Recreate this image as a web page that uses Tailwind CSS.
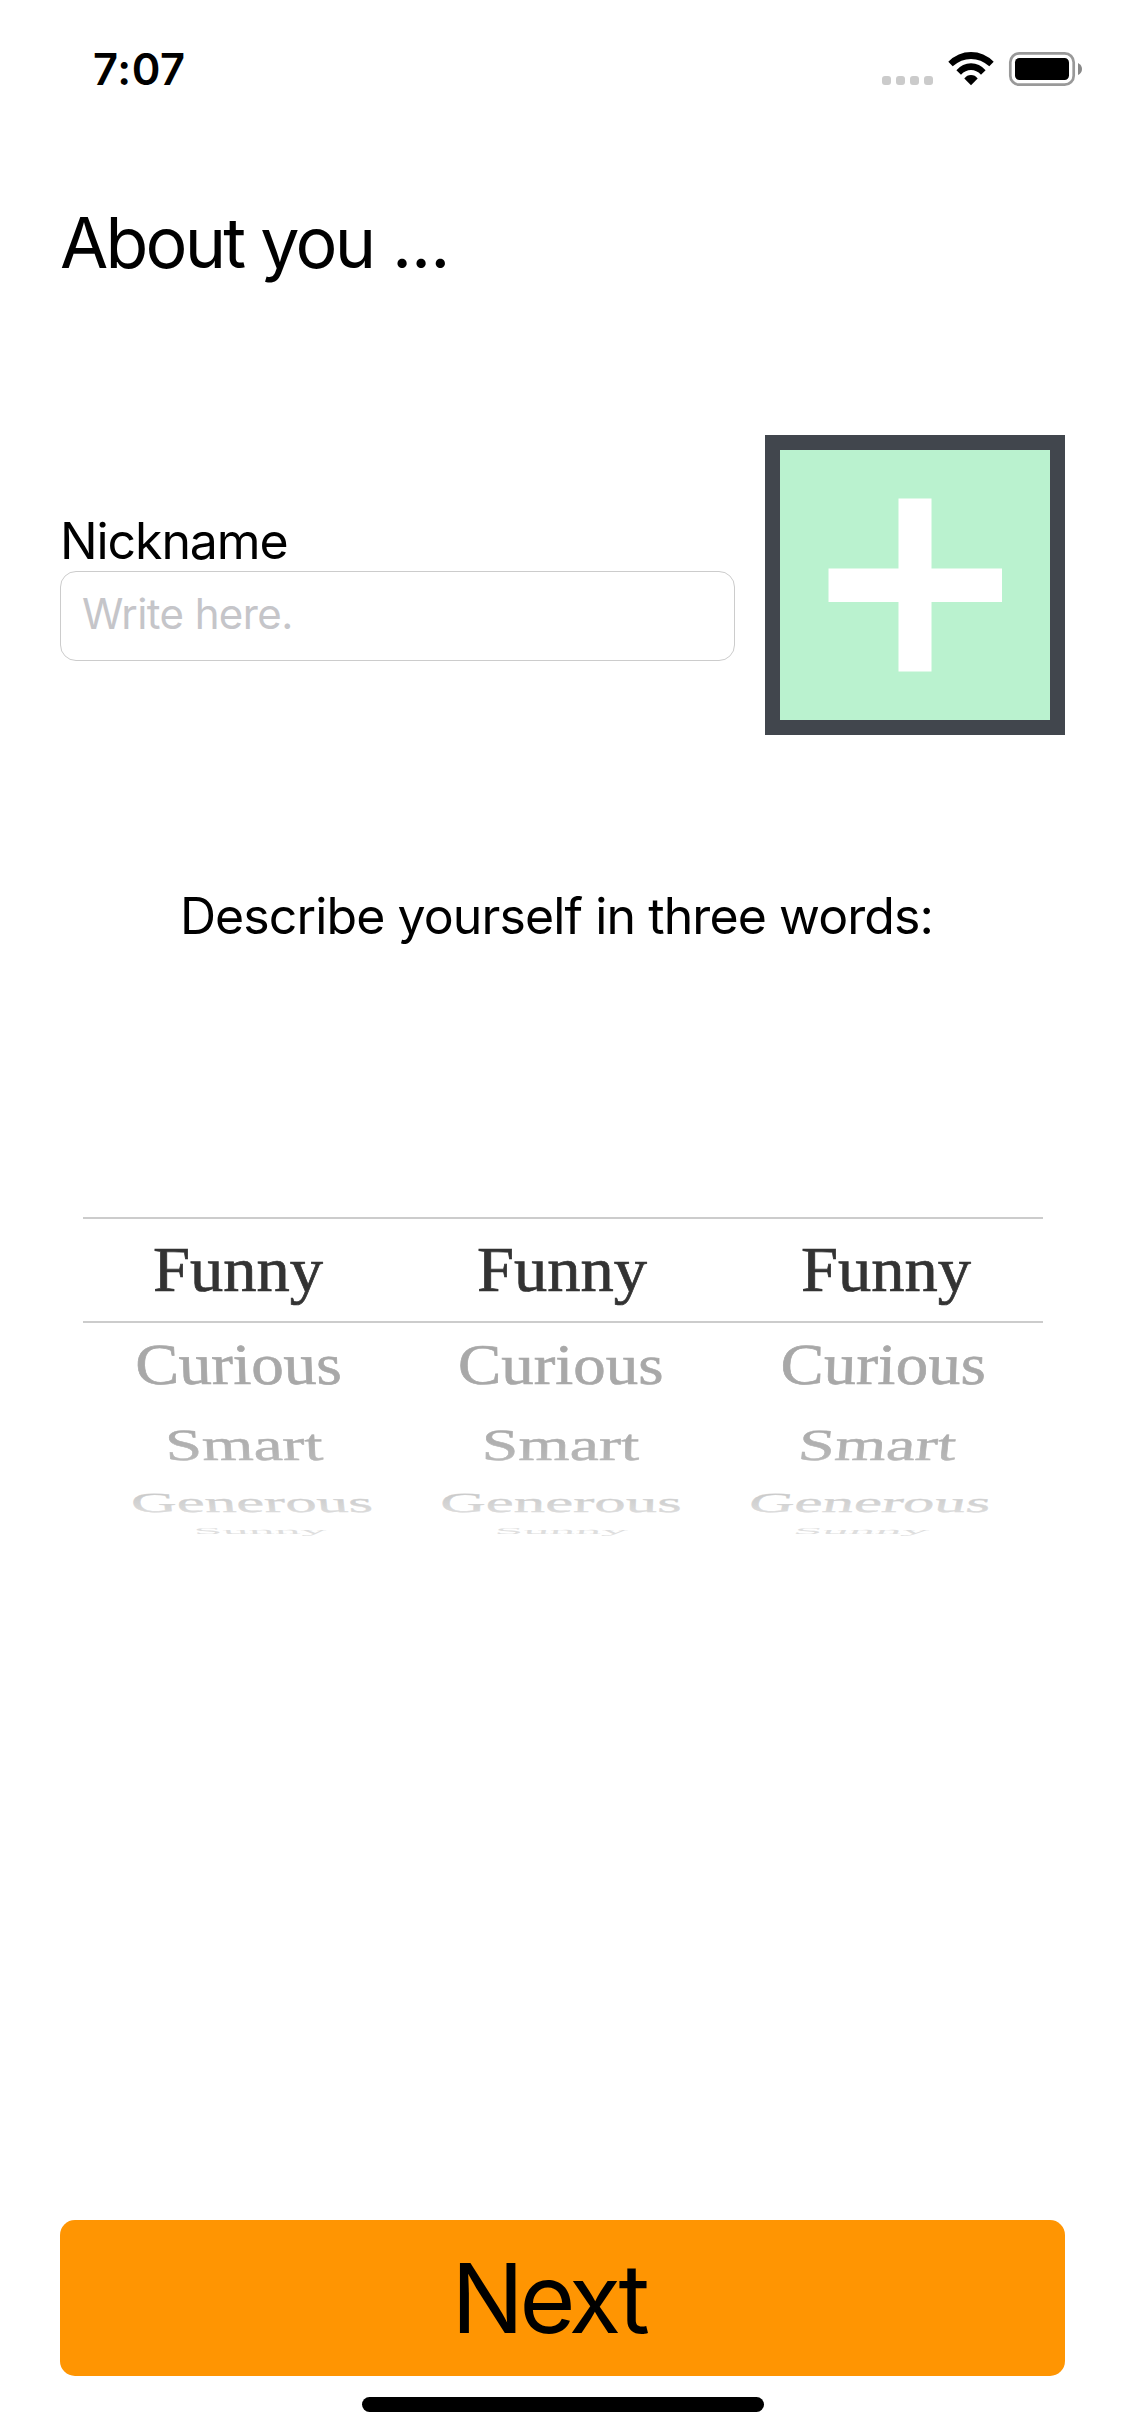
<!DOCTYPE html>
<html lang="en">
<head>
<meta charset="utf-8">
<title>About you</title>
<script src="https://cdn.jsdelivr.net/npm/@tailwindcss/browser@4"></script>
</head>
<body class="bg-white text-black font-[Inter,sans-serif]">
<div class="flex h-[2436px] w-[1125px] flex-col overflow-hidden">
  <header class="flex h-[132px] shrink-0 items-start justify-between pr-[43px] pl-[93px]">
    <div class="mt-[39px] text-[43.5px] leading-[60px] font-semibold tracking-[0.6px]">7:07</div>
    <svg class="mt-[50px] h-10 w-[200px] shrink-0" viewBox="882 50 200 40">
      <g fill="#cbcbcb"><rect x="882" y="76" width="9" height="9" rx="3"/><rect x="896" y="76" width="9" height="9" rx="3"/><rect x="910" y="76" width="9" height="9" rx="3"/><rect x="924" y="76" width="9" height="9" rx="3"/></g>
      <path d="M948.3 61.8Q958 52 971 52Q984 52 993.7 61.8L989.3 66.3Q981 58.9 971 58.9Q961 58.9 952.7 66.3Z"/>
      <path d="M956.4 70.2Q962.5 63.2 971 63.2Q979.5 63.2 985.6 70.2L981 74.7Q976.5 70.1 971 70.1Q965.5 70.1 961 74.7Z"/>
      <path d="M964.3 78.4Q967 75 971 75Q975 75 977.7 78.4L971 85.2Z"/>
      <rect x="1010.3" y="53.3" width="63.4" height="31.4" rx="9" fill="none" stroke="#999" stroke-width="2.7"/>
      <rect x="1015" y="58" width="54" height="22" rx="4.5"/>
      <path d="M1078 63Q1082 65 1082 69T1078 75Z" fill="#888"/>
    </svg>
  </header>

  <main class="flex grow flex-col px-[60px]">
    <h1 class="mt-[69px] text-[70px] leading-[84px] tracking-[-2.8px] whitespace-pre">About you<span class="tracking-[-1px]"> ...</span></h1>

    <section class="mt-[150px] flex h-[300px] gap-[30px]">
      <div class="w-[675px] pt-[76px]">
        <label class="block text-[50px] leading-[60px] tracking-[-1.1px]">Nickname</label>
        <div class="flex h-[90px] items-center rounded-[16px] border border-[#ccc] pb-[5px] pl-[21px] text-[42px] tracking-[-0.6px] text-[#c5c5c9]">Write here.</div>
      </div>
      <button class="flex size-[300px] items-center justify-center border-[15px] border-[#41464d] bg-[#baf2cf]">
        <svg class="size-[174px]" viewBox="0 0 174 174" fill="#fff"><path d="M70.500 .5H103.500V70.500H174V104H103.500V173.500H70.500V104H.5V70.500H70.500Z"/></svg>
      </button>
    </section>

    <p class="mt-[151px] pr-[12px] text-center text-[50px] leading-[60px] tracking-[-0.9px] whitespace-nowrap">Describe yourself in three words:</p>

    <!-- Picker wheel: rows flatten and fade as they turn away -->
    <svg class="mt-[271px] -ml-[60px] h-[333px] w-[1125px]" viewBox="0 1217 1125 333" font-family="Liberation Serif, serif" font-size="63">
      <defs>
        <linearGradient id="smart" x2="0" y2="1"><stop stop-color="#a6a6a6"/><stop offset="1" stop-color="#bcbcbc"/></linearGradient>
        <linearGradient id="generous" x2="0" y2="1"><stop stop-color="#c4c4c4"/><stop offset="1" stop-color="#e0e0e0"/></linearGradient>
      </defs>
      <path d="M83 1217h960v2H83zM83 1321h960v2H83z" fill="#ccc"/>
      <g fill="#333" stroke="#333" stroke-width=".7">
        <text x="153" y="1291" textLength="170" lengthAdjust="spacingAndGlyphs">Funny</text>
        <text x="477" y="1291" textLength="170" lengthAdjust="spacingAndGlyphs">Funny</text>
        <text x="801" y="1291" textLength="170" lengthAdjust="spacingAndGlyphs">Funny</text>
      </g>
      <g fill="#a8a8a8" stroke="#a8a8a8" stroke-width=".7">
        <text transform="translate(136 1383.5) skewX(2) scale(1 .92)" textLength="206" lengthAdjust="spacingAndGlyphs">Curious</text>
        <text transform="translate(458 1383.5) scale(1 .92)" textLength="205.500" lengthAdjust="spacingAndGlyphs">Curious</text>
        <text transform="translate(780 1383.5) skewX(-2) scale(1 .92)" textLength="205.500" lengthAdjust="spacingAndGlyphs">Curious</text>
      </g>
      <g fill="url(#smart)" stroke="url(#smart)" stroke-width=".7">
        <text transform="translate(166 1460) skewX(3) scale(1 .71)" textLength="157.500" lengthAdjust="spacingAndGlyphs">Smart</text>
        <text transform="translate(481.5 1460) skewX(-1) scale(1 .71)" textLength="157.500" lengthAdjust="spacingAndGlyphs">Smart</text>
        <text transform="translate(797 1460) skewX(-6) scale(1 .71)" textLength="157.500" lengthAdjust="spacingAndGlyphs">Smart</text>
      </g>
      <g fill="url(#generous)" stroke="url(#generous)" stroke-width=".7">
        <text transform="translate(132 1512) skewX(6) scale(1 .44)" textLength="241.500" lengthAdjust="spacingAndGlyphs">Generous</text>
        <text transform="translate(440 1512) skewX(-2) scale(1 .44)" textLength="241.500" lengthAdjust="spacingAndGlyphs">Generous</text>
        <text transform="translate(747.5 1512) skewX(-12) scale(1 .44)" textLength="241.500" lengthAdjust="spacingAndGlyphs">Generous</text>
      </g>
      <g fill="#dedede">
        <text transform="translate(194 1534) skewX(10) scale(1 .14)" textLength="133" lengthAdjust="spacingAndGlyphs">Sunny</text>
        <text transform="translate(494 1534) skewX(-12) scale(1 .14)" textLength="133" lengthAdjust="spacingAndGlyphs">Sunny</text>
        <text transform="translate(792 1534) skewX(-30) scale(1 .14)" textLength="135" lengthAdjust="spacingAndGlyphs">Sunny</text>
      </g>
    </svg>

    <button class="mt-[670px] flex h-[156px] shrink-0 items-center justify-center rounded-[15px] bg-[#ff9502] pr-[28px] text-[96px] leading-[116px] tracking-[-4.5px]">Next</button>
    <div class="mt-[21px] ml-[302px] h-[15px] w-[402px] shrink-0 rounded-full bg-black"></div>
  </main>
</div>
</body>
</html>
